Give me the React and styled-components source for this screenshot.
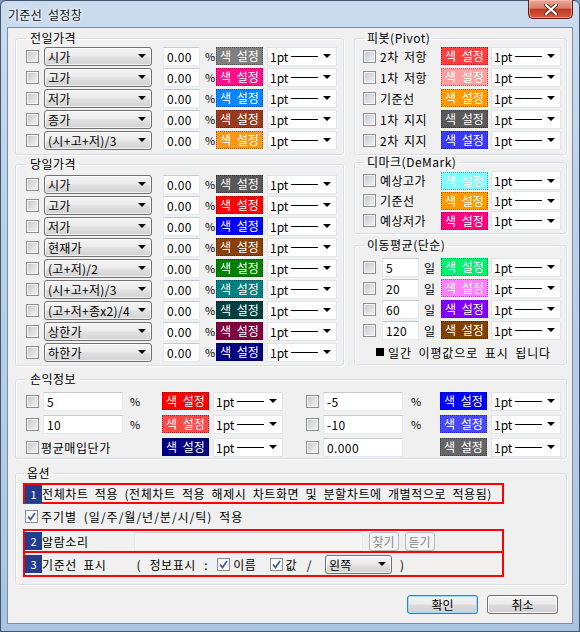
import React from "react";
import styled, { createGlobalStyle } from "styled-components";

const GlobalStyle = createGlobalStyle`
  html, body { margin: 0; padding: 0; }
  body {
    width: 580px;
    height: 632px;
    overflow: hidden;
    background: #7d9cc0;
    font-family: "Noto Sans CJK KR", "Noto Sans", sans-serif;
    font-size: 12px;
    color: #000;
  }
`;

const prevRows = [
  { label: "시가", color: "#7f7f7f" },
  { label: "고가", color: "#ff0f8a" },
  { label: "저가", color: "#0a84ff" },
  { label: "종가", color: "#973a20" },
  { label: "(시+고+저)/3", color: "#f5991d" },
];

const todayRows = [
  { label: "시가", color: "#595959" },
  { label: "고가", color: "#ff0000" },
  { label: "저가", color: "#0000ff" },
  { label: "현재가", color: "#8b3f0c" },
  { label: "(고+저)/2", color: "#008000" },
  { label: "(시+고+저)/3", color: "#008080" },
  { label: "(고+저+종x2)/4", color: "#004040" },
  { label: "상한가", color: "#800040" },
  { label: "하한가", color: "#000080" },
];

const pivotRows = [
  { label: "2차 저항", color: "#ff3f3f" },
  { label: "1차 저항", color: "#ff9f9f" },
  { label: "기준선", color: "#ff9900" },
  { label: "1차 지지", color: "#5a5a5a" },
  { label: "2차 지지", color: "#3a3aff" },
];

const demarkRows = [
  { label: "예상고가", color: "#80ffff" },
  { label: "기준선", color: "#ff9900" },
  { label: "예상저가", color: "#ff0080" },
];

const maRows = [
  { value: "5", color: "#00f070" },
  { value: "20", color: "#ff80ff" },
  { value: "60", color: "#8000ff" },
  { value: "120", color: "#804000" },
];

const Window = styled.div`
  box-sizing: border-box;
  width: 580px;
  height: 632px;
  border: 1px solid #42556d;
  border-radius: 6px 6px 0 0;
  padding: 0 6px 7px;
  display: flex;
  flex-direction: column;
  background: linear-gradient(180deg, #cbdcee 0%, #bcd2ea 30%, #b3cbe6 70%, #a9c4e2 100%);
`;

const TitleBar = styled.div`
  height: 26px;
  flex: none;
  display: flex;
  align-items: flex-start;
  justify-content: space-between;
`;

const TitleText = styled.span`
  margin: 6px 0 0 1px;
  font-size: 12px;
  line-height: 16px;
  letter-spacing: 0.3px;
  word-spacing: 3px;
  color: #111;
  text-shadow: 0 0 5px #fff, 0 0 3px #fff;
`;

const CloseBtn = styled.div`
  box-sizing: border-box;
  width: 45px;
  height: 19px;
  margin-top: -1px;
  border: 1px solid #5e1d14;
  border-top: none;
  border-radius: 0 0 5px 5px;
  background: linear-gradient(180deg, #e9a898 0%, #d8806c 45%, #c13a22 52%, #d65a40 100%);
  box-shadow: inset 0 0 0 1px rgba(255, 210, 200, 0.5);
  display: flex;
  align-items: center;
  justify-content: center;
`;

const Client = styled.div`
  flex: 1;
  border: 1px solid #7c8ea6;
  background: #f0f0f0;
  padding: 3px 5px 0 7px;
  display: flex;
  flex-direction: column;
`;

const TopGrid = styled.div`
  display: grid;
  grid-template-columns: 329px 213px;
  column-gap: 10px;
  align-items: start;
`;

const Column = styled.div`
  display: flex;
  flex-direction: column;
`;

const Group = styled.fieldset`
  margin: ${(p) => p.$mt || 0}px 0 0;
  padding: ${(p) => p.$pad};
  border: 1px solid #d5dfe5;
  border-radius: 3px;
  box-shadow: inset 1px 1px 0 #fff, 1px 1px 0 #fff;
  min-width: 0;
`;

const Legend = styled.legend`
  padding: 0 3px;
  margin-left: 1px;
  font-size: 12px;
  line-height: 14px;
  letter-spacing: 0.5px;
  word-spacing: 2px;
`;

const Rows = styled.div`
  display: flex;
  flex-direction: column;
  gap: ${(p) => p.$gap ?? 1}px;
`;

const Row = styled.div`
  display: flex;
  align-items: center;
  height: ${(p) => p.$h || 20}px;
  white-space: nowrap;
`;

const CheckBox = styled.span`
  box-sizing: border-box;
  flex: none;
  width: 13px;
  height: 13px;
  margin-left: ${(p) => p.$ml || 0}px;
  border: 1px solid #8e8f8f;
  background: ${(p) =>
    p.$on ? "#fff" : "linear-gradient(135deg, #c0c3c7 0%, #dfe0e2 55%, #f3f3f3 100%)"};
  box-shadow: inset 0 0 0 1px #f4f4f4;
  display: flex;
  align-items: center;
  justify-content: center;
`;

const Check = ({ on, ml }) => (
  <CheckBox $on={on} $ml={ml}>
    {on && (
      <svg width="9" height="9" viewBox="0 0 9 9">
        <path d="M1 4.5 L3.5 7.5 L8 1" fill="none" stroke="#3a5aa6" strokeWidth="1.7" />
      </svg>
    )}
  </CheckBox>
);

const ComboBox = styled.div`
  box-sizing: border-box;
  flex: none;
  width: ${(p) => p.$w}px;
  height: 19px;
  margin-left: ${(p) => p.$ml || 0}px;
  border: 1px solid #707070;
  border-radius: 3px;
  background: linear-gradient(180deg, #f4f4f4 0%, #ececec 45%, #e0e0e0 55%, #d2d2d2 100%);
  box-shadow: inset 0 0 0 1px rgba(255, 255, 255, 0.7);
  display: flex;
  align-items: center;
  padding: 0 5px 0 3px;
`;

const ComboText = styled.span`
  flex: 1;
  overflow: hidden;
  white-space: nowrap;
  line-height: 17px;
  letter-spacing: 0.3px;
`;

const Arrow = styled.span`
  flex: none;
  width: 0;
  height: 0;
  margin-left: auto;
  border-left: 4px solid transparent;
  border-right: 4px solid transparent;
  border-top: 4px solid #000;
`;

const Combo = ({ w, ml, children }) => (
  <ComboBox $w={w} $ml={ml}>
    <ComboText>{children}</ComboText>
    <Arrow />
  </ComboBox>
);

const TextBox = styled.input`
  box-sizing: border-box;
  flex: none;
  width: ${(p) => p.$w}px;
  height: 19px;
  margin: 0 0 0 ${(p) => p.$ml || 0}px;
  padding: 0 3px;
  border: 1px solid #e3e9ef;
  border-top-color: #c6cbd2;
  background: ${(p) => (p.disabled ? "#f4f4f4" : "#fff")};
  font: inherit;
  font-size: 12px;
  letter-spacing: 0.4px;
  color: #000;
  outline: none;
`;

const Pct = styled.span`
  flex: none;
  margin-left: ${(p) => p.$ml || 5}px;
  font-size: 11px;
  width: 7px;
`;

const ColorBtn = styled.div`
  box-sizing: border-box;
  flex: none;
  width: 47px;
  height: 18px;
  margin-left: ${(p) => (p.$auto ? "auto" : `${p.$ml || 0}px`)};
  background: ${(p) => p.$c};
  border: 1px dotted rgba(0, 0, 0, 0.35);
  color: #fff;
  display: flex;
  align-items: center;
  justify-content: center;
  word-spacing: 3px;
  line-height: 16px;
`;

const LineBox = styled.div`
  box-sizing: border-box;
  flex: none;
  width: 70px;
  height: 19px;
  margin-left: ${(p) => p.$ml ?? 3}px;
  background: #fff;
  border: 1px solid #e0e4e9;
  display: flex;
  align-items: center;
  padding: 0 5px 0 2px;
`;

const LineSample = styled.span`
  width: 27px;
  height: 1px;
  margin-left: 3px;
  background: #000;
`;

const LineCombo = ({ ml }) => (
  <LineBox $ml={ml}>
    <span>1pt</span>
    <LineSample />
    <Arrow />
  </LineBox>
);

const Label = styled.span`
  margin-left: ${(p) => p.$ml || 0}px;
  flex: ${(p) => (p.$grow ? 1 : "none")};
  word-spacing: ${(p) => p.$ws ?? 2}px;
  letter-spacing: ${(p) => p.$ls ?? 0.3}px;
`;

const Note = styled.div`
  height: 16px;
  margin: 4px 0 0 13px;
  display: flex;
  align-items: center;
  gap: 4px;
  word-spacing: 3px;
  letter-spacing: 0.9px;
`;

const Square = styled.span`
  width: 8px;
  height: 8px;
  background: #000;
`;

const PLGrid = styled.div`
  display: grid;
  grid-template-columns: 257px 255px;
  column-gap: 23px;
  row-gap: 3px;
`;

const MarkBox = styled.div`
  box-sizing: border-box;
  width: 481px;
  height: ${(p) => p.$h}px;
  border: 2px solid #ff0000;
  border-top-width: ${(p) => (p.$noTop ? 0 : 2)}px;
  display: flex;
  align-items: center;
  white-space: nowrap;
  word-spacing: 3px;
  letter-spacing: 0.6px;
`;

const Badge = styled.span`
  flex: none;
  width: 17px;
  height: 18px;
  background: #213c8c;
  color: #fff;
  font-size: 11px;
  letter-spacing: 0;
  display: flex;
  align-items: center;
  justify-content: center;
`;

const SmallBtn = styled.div`
  box-sizing: border-box;
  width: 30px;
  height: 19px;
  margin-left: 6px;
  border: 1px solid #b5b9bd;
  border-radius: 3px;
  background: #f4f4f4;
  color: #8a8a8a;
  letter-spacing: 0;
  display: flex;
  align-items: center;
  justify-content: center;
`;

const Footer = styled.div`
  display: flex;
  justify-content: flex-end;
  gap: 9px;
  margin-top: 10px;
  padding-right: 9px;
`;

const PushBtn = styled.div`
  box-sizing: border-box;
  width: 71px;
  height: 19px;
  border: 1px solid ${(p) => (p.$def ? "#3c7fb1" : "#707070")};
  border-radius: 3px;
  background: linear-gradient(180deg, #f3f3f3 0%, #ebebeb 48%, #dddddd 52%, #cfcfcf 100%);
  box-shadow: inset 0 0 0 1px ${(p) => (p.$def ? "#9fdcf7" : "rgba(255,255,255,.8)")};
  display: flex;
  align-items: center;
  justify-content: center;
  word-spacing: 3px;
`;

const PriceRow = ({ label, color }) => (
  <Row>
    <Check />
    <Combo w={108} ml={5}>{label}</Combo>
    <TextBox $w={37} $ml={11} readOnly defaultValue="0.00" />
    <Pct>%</Pct>
    <ColorBtn $c={color} $ml={4}>색 설정</ColorBtn>
    <LineCombo ml={4} />
  </Row>
);

const NamedRow = ({ label, color, h }) => (
  <Row $h={h}>
    <Check />
    <Label $ml={4} $grow $ls={0.5}>{label}</Label>
    <ColorBtn $c={color}>색 설정</ColorBtn>
    <LineCombo />
  </Row>
);

export default function App() {
  return (
    <>
      <GlobalStyle />
      <Window>
        <TitleBar>
          <TitleText>기준선 설정창</TitleText>
          <CloseBtn>
            <svg width="14" height="11" viewBox="0 0 14 11">
              <path d="M2 1 L12 10 M12 1 L2 10" stroke="#5a2a22" strokeWidth="4" strokeLinecap="round" />
              <path d="M2 1 L12 10 M12 1 L2 10" stroke="#fff" strokeWidth="2.2" strokeLinecap="round" />
            </svg>
          </CloseBtn>
        </TitleBar>
        <Client>
          <TopGrid>
            <Column>
              <Group $pad="1px 5px 4px 10px">
                <Legend>전일가격</Legend>
                <Rows>
                  {prevRows.map((r, i) => (
                    <PriceRow key={i} {...r} />
                  ))}
                </Rows>
              </Group>
              <Group $mt={2} $pad="3px 5px 3px 10px">
                <Legend>당일가격</Legend>
                <Rows>
                  {todayRows.map((r, i) => (
                    <PriceRow key={i} {...r} />
                  ))}
                </Rows>
              </Group>
            </Column>
            <Column>
              <Group $pad="1px 5px 4px 8px">
                <Legend>피봇(Pivot)</Legend>
                <Rows>
                  {pivotRows.map((r, i) => (
                    <NamedRow key={i} {...r} />
                  ))}
                </Rows>
              </Group>
              <Group $mt={0} $pad="2px 5px 3px 8px">
                <Legend>디마크(DeMark)</Legend>
                <Rows>
                  {demarkRows.map((r, i) => (
                    <NamedRow key={i} h={19} {...r} />
                  ))}
                </Rows>
              </Group>
              <Group $mt={4} $pad="5px 5px 4px 8px">
                <Legend>이동평균(단순)</Legend>
                <Rows>
                  {maRows.map((r, i) => (
                    <Row key={i}>
                      <Check />
                      <TextBox $w={37} $ml={6} readOnly defaultValue={r.value} />
                      <Label $ml={5}>일</Label>
                      <ColorBtn $c={r.color} $auto>색 설정</ColorBtn>
                      <LineCombo />
                    </Row>
                  ))}
                </Rows>
                <Note>
                  <Square />
                  <span>일간 이평값으로 표시 됩니다</span>
                </Note>
              </Group>
            </Column>
          </TopGrid>

          <Group $mt={6} $pad="5px 5px 1px 10px">
            <Legend>손익정보</Legend>
            <PLGrid>
              <Row>
                <Check />
                <TextBox $w={80} $ml={4} readOnly defaultValue="5" />
                <Pct $ml={7}>%</Pct>
                <ColorBtn $c="#ff0000" $auto>색 설정</ColorBtn>
                <LineCombo ml={4} />
              </Row>
              <Row>
                <Check />
                <TextBox $w={80} $ml={4} readOnly defaultValue="-5" />
                <Pct $ml={8}>%</Pct>
                <ColorBtn $c="#0000ff" $auto>색 설정</ColorBtn>
                <LineCombo ml={4} />
              </Row>
              <Row>
                <Check />
                <TextBox $w={80} $ml={4} readOnly defaultValue="10" />
                <Pct $ml={7}>%</Pct>
                <ColorBtn $c="#ff4848" $auto>색 설정</ColorBtn>
                <LineCombo ml={4} />
              </Row>
              <Row>
                <Check />
                <TextBox $w={80} $ml={4} readOnly defaultValue="-10" />
                <Pct $ml={8}>%</Pct>
                <ColorBtn $c="#4848ff" $auto>색 설정</ColorBtn>
                <LineCombo ml={4} />
              </Row>
              <Row>
                <Check />
                <Label $ml={2} $ls={0.6}>평균매입단가</Label>
                <ColorBtn $c="#000080" $auto>색 설정</ColorBtn>
                <LineCombo ml={4} />
              </Row>
              <Row>
                <Check />
                <TextBox $w={80} $ml={4} readOnly defaultValue="0.000" />
                <ColorBtn $c="#666666" $auto>색 설정</ColorBtn>
                <LineCombo ml={4} />
              </Row>
            </PLGrid>
          </Group>

          <Group $mt={7} $pad="3px 5px 7px 7px">
            <Legend>옵션</Legend>
            <MarkBox $h={21}>
              <Badge>1</Badge>
              <span>전체차트 적용 (전체차트 적용 해제시 차트화면 및 분할차트에 개별적으로 적용됨)</span>
            </MarkBox>
            <Row $h={25}>
              <Check on ml={2} />
              <Label $ml={3} $ls={1} $ws={3}>주기별 (일/주/월/년/분/시/틱) 적용</Label>
            </Row>
            <MarkBox $h={24}>
              <Badge>2</Badge>
              <span>알람소리</span>
              <TextBox $w={229} $ml={45} disabled />
              <SmallBtn>찾기</SmallBtn>
              <SmallBtn>듣기</SmallBtn>
            </MarkBox>
            <MarkBox $h={24} $noTop>
              <Badge>3</Badge>
              <span>기준선 표시</span>
              <Label $ml={30} $ws={5} $ls={0.6}>( 정보표시 :</Label>
              <Check on ml={9} />
              <Label $ml={3} $ls={0.6}>이름</Label>
              <Check on ml={13} />
              <Label $ml={3}>값</Label>
              <Label $ml={10}>/</Label>
              <Combo w={67} ml={13}>왼쪽</Combo>
              <Label $ml={8}>)</Label>
            </MarkBox>
          </Group>

          <Footer>
            <PushBtn $def>확인</PushBtn>
            <PushBtn>취소</PushBtn>
          </Footer>
        </Client>
      </Window>
    </>
  );
}
